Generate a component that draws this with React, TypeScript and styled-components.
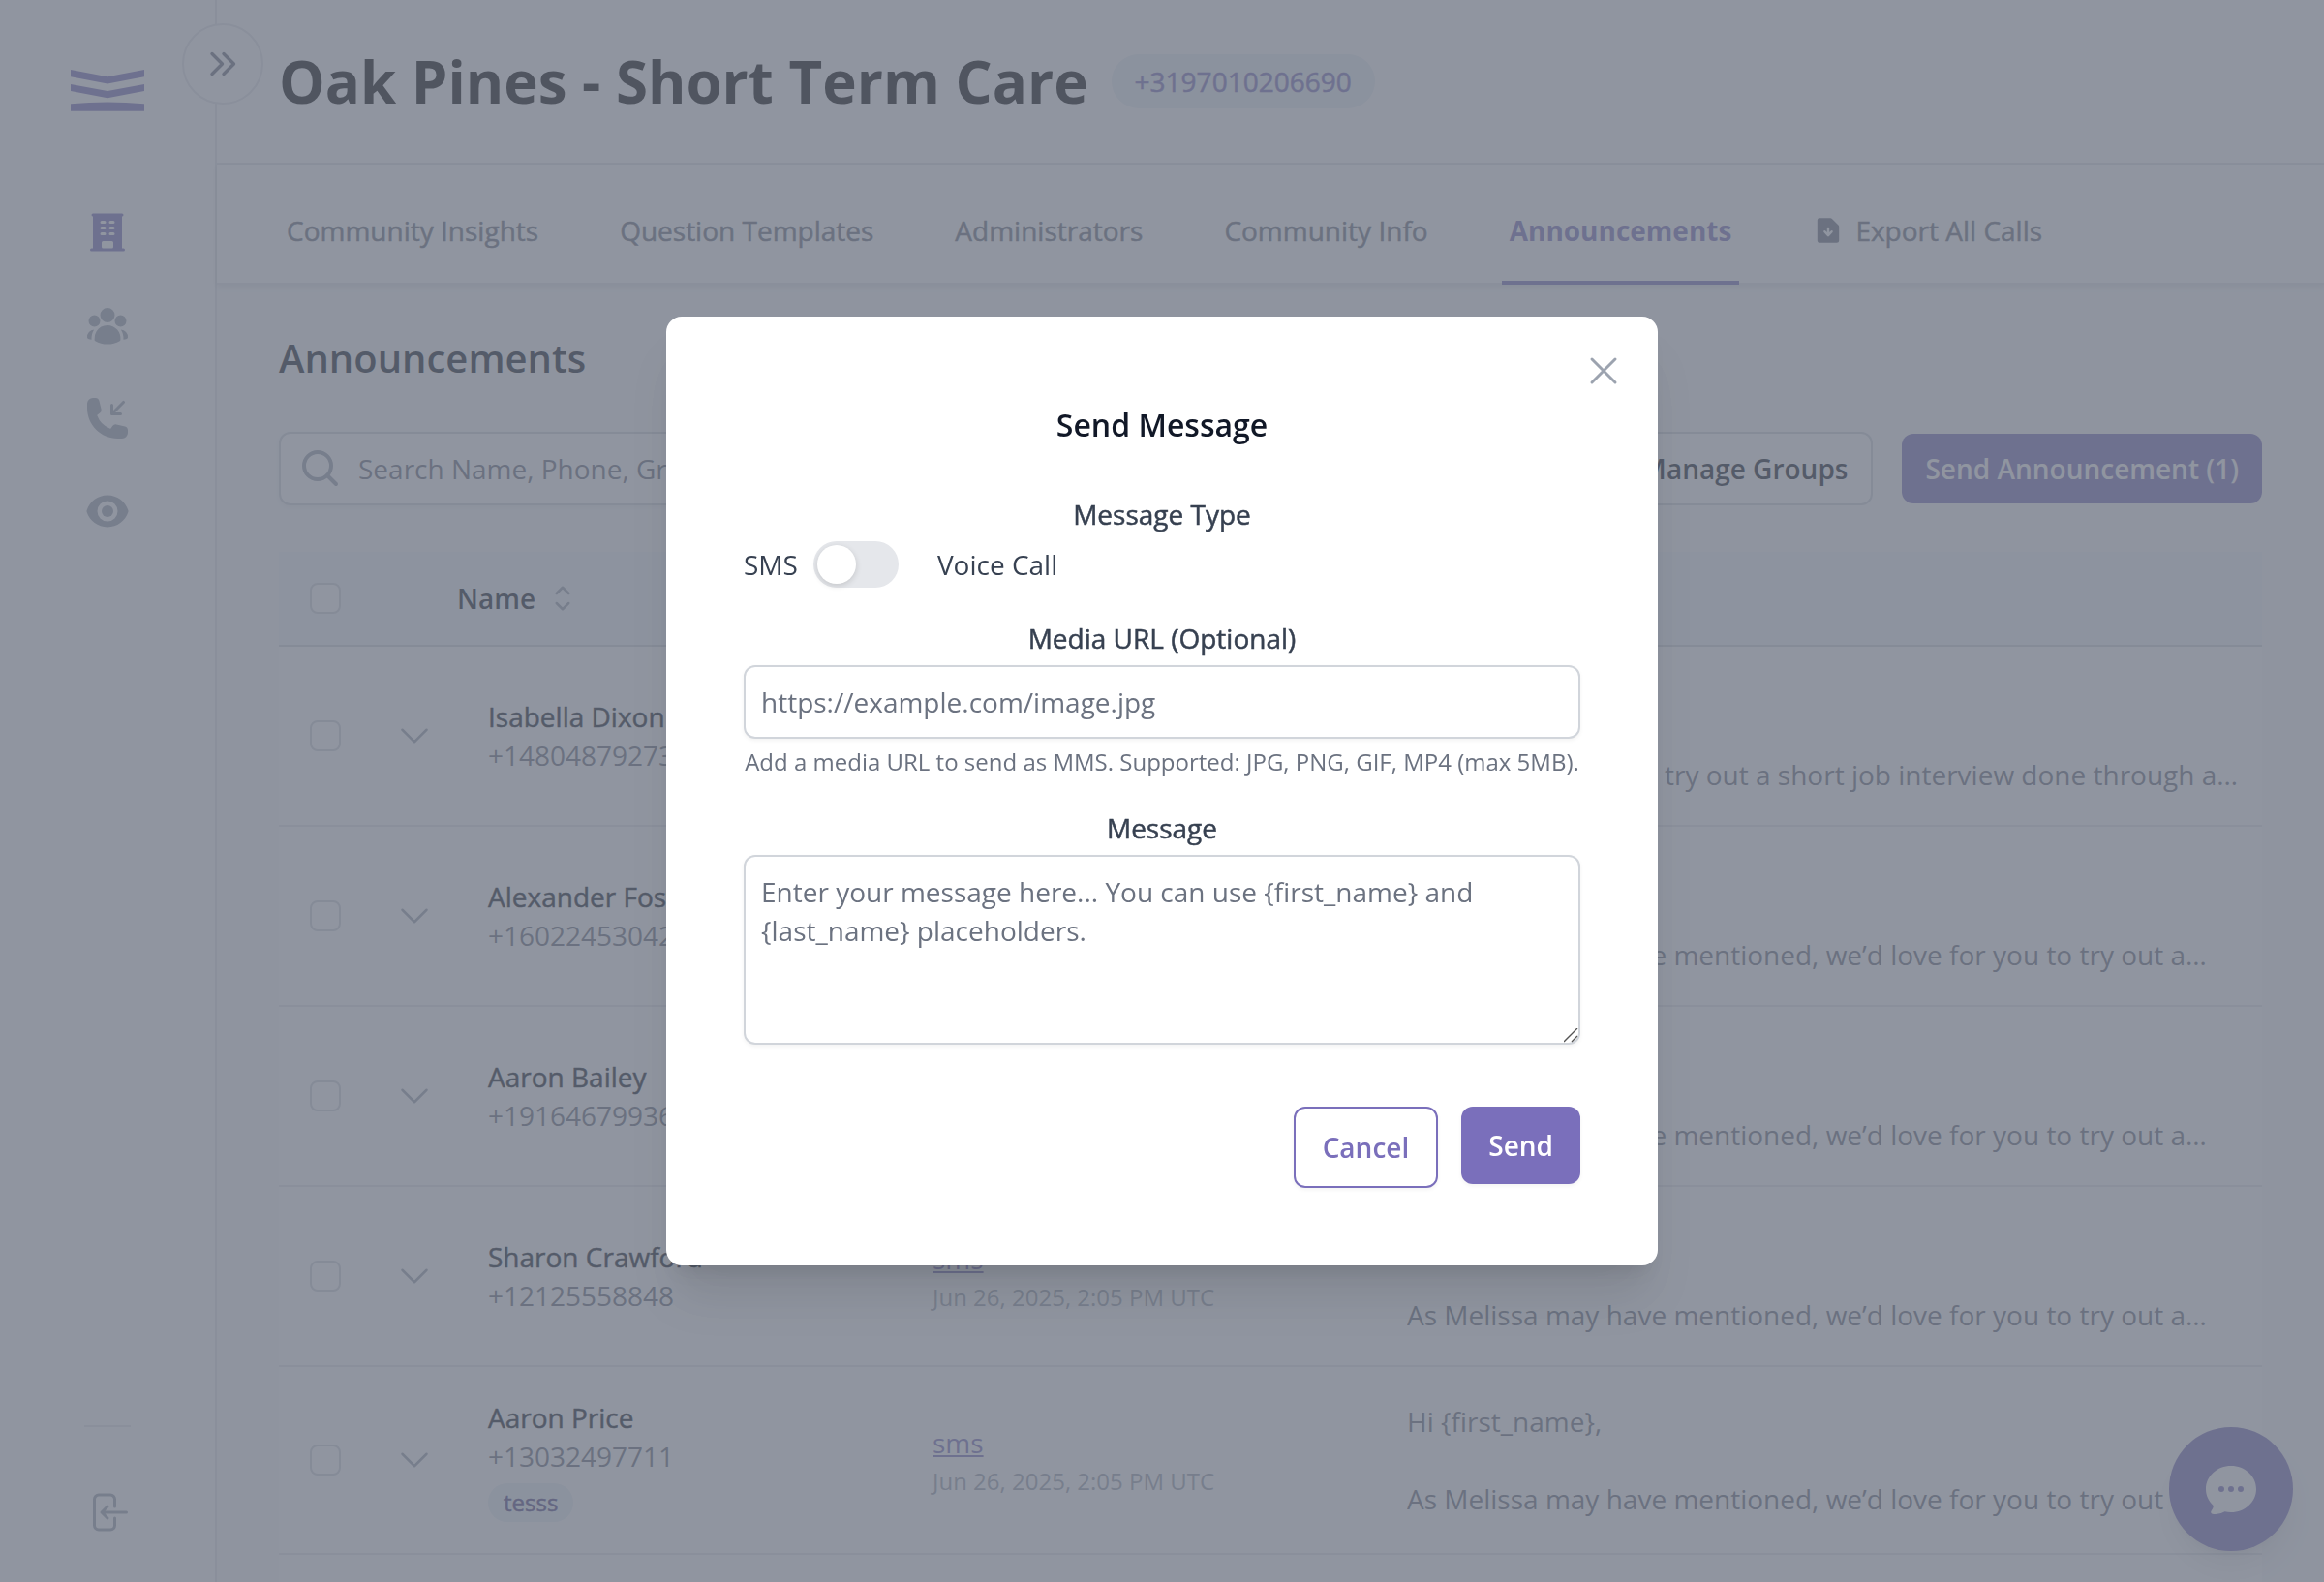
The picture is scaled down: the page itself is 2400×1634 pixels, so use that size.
import React, { useState } from "react";
import styled, { createGlobalStyle, css } from "styled-components";
import {
  HiBuildingOffice,
  HiUserGroup,
  HiPhoneArrowDownLeft,
  HiEye,
  HiMiniDocumentArrowDown,
  HiChatBubbleOvalLeftEllipsis,
} from "react-icons/hi2";

const color = {
  brand: "#7a6fbb",
  brandDeep: "#4f4585",
  tint: "#eaf1f5",
  headTint: "#f3f7fa",
  gray50: "#f9fafb",
  gray200: "#e5e7eb",
  gray300: "#d1d5db",
  gray400: "#9ca3af",
  gray500: "#6b7280",
  gray700: "#374151",
  gray900: "#111827",
};

const GlobalStyle = createGlobalStyle`
  *, *::before, *::after { box-sizing: border-box; }
  html, body { margin: 0; }
  body {
    font-family: "Open Sans", "Noto Sans", sans-serif;
    font-size: 28px;
    line-height: 40px;
    color: ${color.gray900};
    background: #fff;
  }
  button, input, textarea { font: inherit; color: inherit; margin: 0; }
  h1, h2, h3, p { margin: 0; }
`;

/* Medium weight: the family has no 500 cut, so the regular one is thickened. */
const mediumText = css`
  font-family: "Open Sans Medium", "Open Sans", "Noto Sans", sans-serif;
  font-weight: 500;
  -webkit-text-stroke: 0.5px currentColor;
`;

/* ---------- shell ---------- */

const Shell = styled.div`
  display: flex;
  height: 100vh;
  overflow: hidden;
`;

const Sidebar = styled.aside`
  position: relative;
  flex: none;
  display: flex;
  flex-direction: column;
  align-items: center;
  width: 224px;
  padding: 72px 0 48px;
  background: #fff;
  border-right: 2px solid ${color.gray200};
`;

const Logo = styled.svg`
  display: block;
  width: 76px;
  height: 44px;
  fill: ${color.brand};
`;

const SideNav = styled.nav`
  display: flex;
  flex-direction: column;
  gap: 48px;
  margin-top: 100px;
`;

const SideLink = styled.a<{ $active?: boolean }>`
  display: block;
  height: 48px;
  color: ${(p) => (p.$active ? color.brand : color.gray400)};
  svg {
    display: block;
    width: 48px;
    height: 48px;
  }
`;

const SideFooter = styled.div`
  display: flex;
  flex-direction: column;
  margin-top: auto;
  padding-top: 64px;
  border-top: 2px solid ${color.gray200};
`;

const IconButton = styled.button`
  display: block;
  padding: 0;
  border: 0;
  background: none;
  color: ${color.gray400};
  cursor: pointer;
`;

const CollapseButton = styled.button`
  position: absolute;
  top: 24px;
  right: -50px;
  z-index: 2;
  display: grid;
  place-items: center;
  width: 84px;
  height: 84px;
  padding: 0;
  border: 2px solid ${color.gray200};
  border-radius: 50%;
  background: #fff;
  color: ${color.gray500};
`;

const StrokeIcon = styled.svg<{ $size: number; $weight?: number }>`
  display: block;
  flex: none;
  width: ${(p) => p.$size}px;
  height: ${(p) => p.$size}px;
  fill: none;
  stroke: currentColor;
  stroke-width: ${(p) => p.$weight ?? 1.5};
  stroke-linecap: round;
  stroke-linejoin: round;
`;

const Page = styled.div`
  flex: 1;
  min-width: 0;
  display: flex;
  flex-direction: column;
`;

const PageHeader = styled.header`
  flex: none;
  display: flex;
  align-items: center;
  gap: 24px;
  padding: 48px 64px;
  background: #fff;
  border-bottom: 2px solid ${color.gray200};
`;

const PageTitle = styled.h1`
  font-size: 60px;
  line-height: 72px;
  font-weight: 700;
  color: #000;
`;

const Pill = styled.span<{ $small?: boolean }>`
  ${mediumText}
  display: inline-block;
  padding: ${(p) => (p.$small ? "4px 16px" : "8px 24px")};
  border-radius: 28px;
  background: ${color.tint};
  color: ${(p) => (p.$small ? color.brandDeep : color.brand)};
  font-size: ${(p) => (p.$small ? 24 : 28)}px;
  line-height: ${(p) => (p.$small ? 32 : 40)}px;
`;

const TabBar = styled.nav`
  position: relative;
  z-index: 1;
  flex: none;
  display: flex;
  gap: 68px;
  padding: 16px 64px 0;
  background: #fff;
  box-shadow: 0 2px 6px rgba(0, 0, 0, 0.1), inset 0 -2px 0 ${color.gray200};
`;

const Tab = styled.a<{ $active?: boolean }>`
  ${mediumText}
  display: flex;
  align-items: center;
  gap: 12px;
  padding: 32px 8px;
  border-bottom: 4px solid ${(p) => (p.$active ? color.brand : "transparent")};
  color: ${(p) => (p.$active ? color.brand : color.gray500)};
  text-decoration: none;
  white-space: nowrap;
  ${(p) =>
    p.$active &&
    css`
      font-family: inherit;
      font-weight: 700;
      -webkit-text-stroke: 0;
    `}
  svg {
    width: 32px;
    height: 32px;
    stroke: none;
  }
`;

const Content = styled.main`
  flex: 1;
  min-height: 0;
  display: flex;
  flex-direction: column;
  gap: 48px;
  padding: 48px 64px 0;
  overflow: hidden;
  background: ${color.gray50};
`;

const SectionTitle = styled.h2`
  font-size: 40px;
  line-height: 56px;
  font-weight: 600;
`;

/* ---------- toolbar ---------- */

const Toolbar = styled.div`
  display: flex;
  align-items: center;
  gap: 30px;
`;

const SearchBox = styled.label`
  display: flex;
  align-items: center;
  gap: 18px;
  width: 600px;
  height: 76px;
  margin-right: auto;
  padding: 0 22px;
  border: 2px solid ${color.gray300};
  border-radius: 12px;
  background: #fff;
  box-shadow: 0 2px 4px rgba(0, 0, 0, 0.05);
  color: ${color.gray400};
`;

const SearchInput = styled.input`
  flex: 1;
  min-width: 0;
  padding: 0;
  border: 0;
  outline: 0;
  background: none;
  color: ${color.gray900};
  &::placeholder {
    color: ${color.gray500};
    opacity: 1;
  }
`;

const ToolButton = styled.button<{ $primary?: boolean }>`
  padding: 16px 24px;
  border: ${(p) => (p.$primary ? "0" : `2px solid ${color.gray300}`)};
  border-radius: 12px;
  background: ${(p) => (p.$primary ? color.brand : "#fff")};
  color: ${(p) => (p.$primary ? "#fff" : color.gray900)};
  font-weight: 600;
  white-space: nowrap;
`;

/* ---------- table ---------- */

const TablePanel = styled.div`
  flex: 1;
  min-height: 0;
  overflow: hidden;
  background: #fff;
`;

const Table = styled.table`
  width: 100%;
  table-layout: fixed;
  border-collapse: separate;
  border-spacing: 0;
`;

const Col = styled.col<{ $width?: number }>`
  width: ${(p) => (p.$width ? `${p.$width}px` : "auto")};
`;

const HeadCell = styled.th<{ $flush?: boolean }>`
  padding: 28px ${(p) => (p.$flush ? 0 : 32)}px;
  background: ${color.headTint};
  border-bottom: 2px solid ${color.gray300};
  font-weight: 600;
  text-align: left;
`;

const HeadLabel = styled.span`
  display: flex;
  align-items: center;
  gap: 8px;
  height: 40px;
  color: ${color.gray900};
  svg {
    color: ${color.gray400};
  }
`;

const Cell = styled.td`
  padding: 32px;
  border-bottom: 2px solid ${color.gray200};
  vertical-align: middle;
`;

const MessageCell = styled(Cell)`
  padding-right: 16px;
  color: ${color.gray500};
`;

const MessageText = styled.p`
  max-height: 120px;
  overflow: hidden;
  white-space: pre;
`;

const Checkbox = styled.input.attrs({ type: "checkbox" })`
  appearance: none;
  display: block;
  width: 32px;
  height: 32px;
  border: 2px solid ${color.gray300};
  border-radius: 8px;
  background: #fff;
`;

const ExpandButton = styled(IconButton)`
  margin-left: -8px;
`;

const PersonName = styled.div`
  ${mediumText}
`;

const Phone = styled.div`
  color: ${color.gray500};
`;

const Tags = styled.div`
  display: flex;
  margin-top: 8px;
`;

const ChannelLink = styled.a`
  display: block;
  width: fit-content;
  color: ${color.brand};
  text-decoration: underline;
`;

const DateText = styled.div`
  margin-top: 4px;
  font-size: 24px;
  line-height: 32px;
  color: ${color.gray400};
`;

/* ---------- floating chat ---------- */

const ChatButton = styled.button`
  position: fixed;
  right: 32px;
  bottom: 32px;
  z-index: 3;
  display: grid;
  place-items: center;
  width: 128px;
  height: 128px;
  padding: 0;
  border: 0;
  border-radius: 50%;
  background: ${color.brand};
  color: #fff;
  box-shadow: 0 20px 30px -6px rgba(0, 0, 0, 0.1), 0 8px 12px -8px rgba(0, 0, 0, 0.1);
  svg {
    width: 64px;
    height: 64px;
  }
`;

/* ---------- modal ---------- */

const Overlay = styled.div`
  position: fixed;
  inset: 0;
  z-index: 10;
  display: grid;
  place-items: center;
  background: rgba(107, 114, 128, 0.75);
`;

const Dialog = styled.form`
  position: relative;
  display: flex;
  flex-direction: column;
  gap: 32px;
  width: min(1024px, 90vw);
  padding: 88px 80px 80px;
  border-radius: 16px;
  background: #fff;
  color: ${color.gray700};
  box-shadow: 0 40px 50px -10px rgba(0, 0, 0, 0.1), 0 16px 20px -12px rgba(0, 0, 0, 0.1);
`;

const CloseButton = styled(IconButton)`
  position: absolute;
  top: 32px;
  right: 32px;
`;

const DialogTitle = styled.h3`
  margin-bottom: 16px;
  font-size: 32px;
  line-height: 48px;
  font-weight: 600;
  text-align: center;
  color: ${color.gray900};
`;

const Field = styled.div`
  display: flex;
  flex-direction: column;
  gap: 8px;
`;

const FieldLabel = styled.label`
  ${mediumText}
  text-align: center;
`;

const SwitchRow = styled.div`
  display: flex;
  align-items: center;
  height: 48px;
`;

const Switch = styled.input.attrs({ type: "checkbox", role: "switch" })`
  appearance: none;
  display: flex;
  width: 88px;
  height: 48px;
  margin: 0 40px 0 16px;
  padding: 4px;
  border-radius: 24px;
  background: ${(p) => (p.checked ? color.brand : color.gray200)};
  &::before {
    content: "";
    width: 40px;
    height: 40px;
    margin-left: ${(p) => (p.checked ? 40 : 0)}px;
    border-radius: 50%;
    background: #fff;
    box-shadow: 0 2px 6px rgba(0, 0, 0, 0.14);
  }
`;

const fieldBox = css`
  display: block;
  width: 100%;
  padding: 16px;
  border: 2px solid ${color.gray300};
  border-radius: 12px;
  background: #fff;
  box-shadow: 0 2px 4px rgba(0, 0, 0, 0.05);
  &::placeholder {
    color: ${color.gray500};
    opacity: 1;
  }
`;

const TextInput = styled.input`
  ${fieldBox}
  height: 76px;
`;

const TextArea = styled.textarea`
  ${fieldBox}
  height: 196px;
  resize: vertical;
  &::-webkit-resizer {
    background: url("data:image/svg+xml,%3Csvg xmlns='http://www.w3.org/2000/svg' viewBox='0 0 15 15'%3E%3Cpath d='M0 14 14 0M8 14l6-6' stroke='%23555' stroke-width='1.4' fill='none'/%3E%3C/svg%3E")
      center / 15px 15px no-repeat;
  }
`;

const Hint = styled.p`
  font-size: 24px;
  line-height: 32px;
  text-align: center;
  color: ${color.gray500};
`;

const Actions = styled.div`
  display: flex;
  justify-content: flex-end;
  align-items: flex-start;
  gap: 24px;
  margin-top: 32px;
`;

const ActionButton = styled.button<{ $primary?: boolean }>`
  padding: 20px 28px;
  border: ${(p) => (p.$primary ? "0" : `2px solid ${color.brand}`)};
  border-radius: 12px;
  background: ${(p) => (p.$primary ? color.brand : "#fff")};
  color: ${(p) => (p.$primary ? "#fff" : color.brand)};
  font-weight: 600;
  box-shadow: 0 2px 4px rgba(0, 0, 0, 0.05);
`;

/* ---------- data ---------- */

const tabs = [
  "Community Insights",
  "Question Templates",
  "Administrators",
  "Community Info",
  "Announcements",
];

const invite =
  "Hi {first_name},\n\nAs Melissa may have mentioned, we’d love for you to try out a…";

const people = [
  {
    name: "Isabella Dixon",
    phone: "+14804879273",
    message: "Hi {first_name},\n\nWe’d love for you to try out a short job interview done through a…",
  },
  { name: "Alexander Foster", phone: "+16022453042", message: invite },
  { name: "Aaron Bailey", phone: "+19164679936", message: invite },
  { name: "Sharon Crawford", phone: "+12125558848", message: invite },
  { name: "Aaron Price", phone: "+13032497711", message: invite, tag: "tesss" },
];

function PersonRow({ person }: { person: (typeof people)[number] }) {
  return (
    <tr>
      <Cell>
        <Checkbox aria-label={`Select ${person.name}`} />
      </Cell>
      <Cell>
        <ExpandButton type="button" aria-label={`Expand ${person.name}`}>
          <StrokeIcon $size={40} viewBox="0 0 24 24" aria-hidden>
            <path d="m19.5 8.25-7.5 7.5-7.5-7.5" />
          </StrokeIcon>
        </ExpandButton>
      </Cell>
      <Cell>
        <PersonName>{person.name}</PersonName>
        <Phone>{person.phone}</Phone>
        {person.tag && (
          <Tags>
            <Pill $small>{person.tag}</Pill>
          </Tags>
        )}
      </Cell>
      <Cell>
        <ChannelLink href="#sms">sms</ChannelLink>
        <DateText>Jun 26, 2025, 2:05 PM UTC</DateText>
      </Cell>
      <MessageCell>
        <MessageText>{person.message}</MessageText>
      </MessageCell>
    </tr>
  );
}

function SendMessageDialog() {
  const [voice, setVoice] = useState(false);
  return (
    <Overlay>
      <Dialog role="dialog" aria-labelledby="dialog-title" onSubmit={(e) => e.preventDefault()}>
        <CloseButton type="button" aria-label="Close">
          <StrokeIcon $size={48} viewBox="0 0 24 24" aria-hidden>
            <path d="M6 18 18 6M6 6l12 12" />
          </StrokeIcon>
        </CloseButton>
        <DialogTitle id="dialog-title">Send Message</DialogTitle>
        <Field>
          <FieldLabel htmlFor="message-type">Message Type</FieldLabel>
          <SwitchRow>
            <span>SMS</span>
            <Switch
              id="message-type"
              checked={voice}
              onChange={(e) => setVoice(e.target.checked)}
            />
            <span>Voice Call</span>
          </SwitchRow>
        </Field>
        <Field>
          <FieldLabel htmlFor="media-url">Media URL (Optional)</FieldLabel>
          <TextInput id="media-url" type="url" placeholder="https://example.com/image.jpg" />
          <Hint>Add a media URL to send as MMS. Supported: JPG, PNG, GIF, MP4 (max 5MB).</Hint>
        </Field>
        <Field>
          <FieldLabel htmlFor="message">Message</FieldLabel>
          <TextArea
            id="message"
            placeholder="Enter your message here... You can use {first_name} and {last_name} placeholders."
          />
        </Field>
        <Actions>
          <ActionButton type="button">Cancel</ActionButton>
          <ActionButton type="submit" $primary>
            Send
          </ActionButton>
        </Actions>
      </Dialog>
    </Overlay>
  );
}

export default function App() {
  return (
    <>
      <GlobalStyle />
      <Shell>
        <Sidebar>
          <Logo viewBox="0 0 76 44" aria-hidden>
            <path d="M0 0 38 7.3 76 0V7.3L38 14.4 0 7.3Z" />
            <path d="M0 15 38 22 76 15V22L38 29.2 0 22Z" />
            <path d="M0 35.3Q38 31.5 76 35.3V42.8H0Z" />
          </Logo>
          <CollapseButton type="button" aria-label="Expand sidebar">
            <StrokeIcon $size={32} $weight={3.4} viewBox="0 0 32 32" aria-hidden>
              <path d="M5 5.5 15.5 16 5 26.5M17 5.5 27.5 16 17 26.5" />
            </StrokeIcon>
          </CollapseButton>
          <SideNav aria-label="Main">
            <SideLink href="#communities" aria-label="Communities" $active>
              <HiBuildingOffice />
            </SideLink>
            <SideLink href="#people" aria-label="People">
              <HiUserGroup />
            </SideLink>
            <SideLink href="#calls" aria-label="Calls">
              <HiPhoneArrowDownLeft />
            </SideLink>
            <SideLink href="#monitor" aria-label="Monitor">
              <HiEye />
            </SideLink>
          </SideNav>
          <SideFooter>
            <IconButton type="button" aria-label="Log out">
              <StrokeIcon $size={48} viewBox="0 0 24 24" aria-hidden>
                <path d="M15.75 9V5.25A2.25 2.25 0 0 0 13.5 3h-6a2.25 2.25 0 0 0-2.25 2.25v13.5A2.25 2.25 0 0 0 7.5 21h6a2.25 2.25 0 0 0 2.25-2.25V15M12 9l-3 3m0 0 3 3m-3-3h12.75" />
              </StrokeIcon>
            </IconButton>
          </SideFooter>
        </Sidebar>

        <Page>
          <PageHeader>
            <PageTitle>Oak Pines - Short Term Care</PageTitle>
            <Pill>+3197010206690</Pill>
          </PageHeader>
          <TabBar aria-label="Sections">
            {tabs.map((tab) => (
              <Tab key={tab} href="#tab" $active={tab === "Announcements"}>
                {tab}
              </Tab>
            ))}
            <Tab href="#export">
              <HiMiniDocumentArrowDown />
              Export All Calls
            </Tab>
          </TabBar>
          <Content>
            <SectionTitle>Announcements</SectionTitle>
            <Toolbar>
              <SearchBox>
                <StrokeIcon $size={40} $weight={4} viewBox="0 0 40 40" aria-hidden>
                  <circle cx="16" cy="17" r="14" />
                  <path d="m26 27 9 9" />
                </StrokeIcon>
                <SearchInput type="text" aria-label="Search" placeholder="Search Name, Phone, Group" />
              </SearchBox>
              <ToolButton type="button">Manage Groups</ToolButton>
              <ToolButton type="button" $primary>
                Send Announcement (1)
              </ToolButton>
            </Toolbar>
            <TablePanel>
              <Table>
                <colgroup>
                  <Col $width={96} />
                  <Col $width={88} />
                  <Col $width={459} />
                  <Col $width={490} />
                  <Col />
                </colgroup>
                <thead>
                  <tr>
                    <HeadCell>
                      <Checkbox aria-label="Select all" />
                    </HeadCell>
                    <HeadCell aria-label="Details" />
                    <HeadCell $flush>
                      <HeadLabel>
                        Name
                        <StrokeIcon $size={40} viewBox="0 0 24 24" aria-hidden>
                          <path d="M8.25 15 12 18.75 15.75 15m-7.5-6L12 5.25 15.75 9" />
                        </StrokeIcon>
                      </HeadLabel>
                    </HeadCell>
                    <HeadCell>Channel</HeadCell>
                    <HeadCell>Message</HeadCell>
                  </tr>
                </thead>
                <tbody>
                  {people.map((person) => (
                    <PersonRow key={person.phone} person={person} />
                  ))}
                </tbody>
              </Table>
            </TablePanel>
          </Content>
        </Page>
      </Shell>
      <ChatButton type="button" aria-label="Open chat">
        <HiChatBubbleOvalLeftEllipsis />
      </ChatButton>
      <SendMessageDialog />
    </>
  );
}
